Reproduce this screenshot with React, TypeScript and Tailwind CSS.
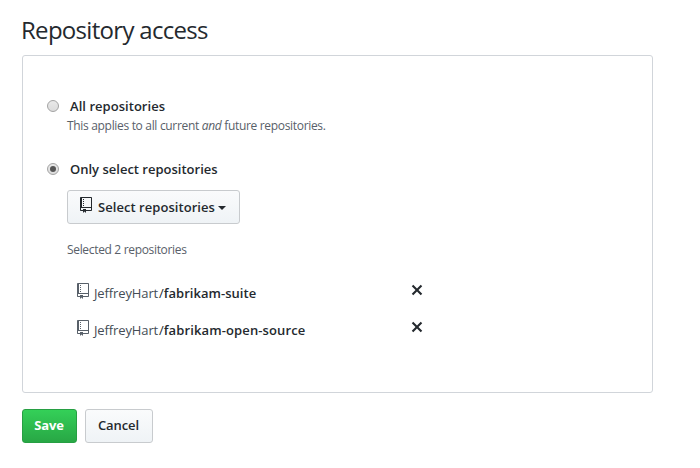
import React from "react";

function RepoIcon({ className = "" }: { className?: string }) {
  return (
    <svg className={`h-4 w-3 shrink-0 ${className}`} viewBox="0 0 12 16" fill="currentColor" aria-hidden="true">
      <path fillRule="evenodd" d="M4 9H3V8h1v1zm0-3H3v1h1V6zm0-2H3v1h1V4zm0-2H3v1h1V2zm8-1v12c0 .55-.45 1-1 1H6v2l-1.5-1.5L3 16v-2H1c-.55 0-1-.45-1-1V1c0-.55.45-1 1-1h10c.55 0 1 .45 1 1zm-1 10H1v2h2v-1h3v1h5v-2zm0-10H2v9h9V1z" />
    </svg>
  );
}

function RemoveIcon() {
  return (
    <svg className="h-4 w-3" viewBox="0 0 12 16" fill="currentColor" aria-hidden="true">
      <path fillRule="evenodd" d="M7.48 8l3.75 3.75-1.48 1.48L6 9.48l-3.75 3.75-1.48-1.48L4.52 8 .77 4.25l1.48-1.48L6 6.52l3.75-3.75 1.48 1.48L7.48 8z" />
    </svg>
  );
}

function Radio({ checked = false }: { checked?: boolean }) {
  return (
    <span role="radio" aria-checked={checked} className="flex size-3 shrink-0 items-center justify-center rounded-full border border-[#a3a3a3] bg-linear-to-b from-[#e9e9e9] to-[#dcdcdc]">
      {checked && <span className="size-1.5 rounded-full bg-[#555]" />}
    </span>
  );
}

function RepoRow({ name, tracking }: { name: string; tracking: string }) {
  return (
    <li className="flex h-[37px] w-[346px] items-start">
      <RepoIcon className="mt-px text-[#586069]" />
      <span className="ml-[5px] mt-px w-[65px] text-[13px] leading-5 tracking-[-0.12px] text-[#444d56]">JeffreyHart</span>
      <span className="mt-px text-[13px] leading-5">/</span>
      <span className={`mt-px flex-1 text-[13px] font-semibold leading-5 ${tracking}`}>{name}</span>
      <button aria-label={`Remove ${name}`}><RemoveIcon /></button>
    </li>
  );
}

export default function App() {
  return (
    <main className="h-[468px] w-[700px] overflow-hidden whitespace-nowrap bg-white pl-[22px] pt-3 font-['Open_Sans','Noto_Sans',sans-serif] text-[#24292e]">
      <h1 className="-ml-px h-[43px] text-2xl leading-9 tracking-[-0.7px]">Repository access</h1>
      <section className="h-[338px] w-[631px] rounded-[3px] border border-[#d1d5da] pl-6 pt-10">
        <div className="flex h-5 items-center">
          <Radio />
          <span className="ml-[11px] text-[13px] font-semibold leading-5 tracking-[0.04px]">All repositories</span>
        </div>
        <p className="ml-5 mt-px text-xs leading-[18px] tracking-[-0.32px] text-[#586069]">
          This applies to all current <em>and</em> future repositories.
        </p>
        <div className="mt-6 flex h-5 items-center">
          <Radio checked />
          <span className="ml-[11px] text-[13px] font-semibold leading-5">Only select repositories</span>
        </div>
        <button className="ml-5 mt-[11px] flex h-[34px] w-[173px] items-center rounded-[3px] border border-[#c8cbce] bg-linear-to-b from-[#fafbfc] to-[#eff3f6] pl-3">
          <RepoIcon className="-mt-1" />
          <span className="ml-1.5 mt-0.5 w-[120px] text-left text-[13px] font-semibold tracking-[0.05px]">Select repositories</span>
          <span className="mt-px border-x-4 border-t-4 border-x-transparent border-t-[#24292e]" />
        </button>
        <p className="ml-5 mt-4 text-xs leading-5 tracking-[-0.33px] text-[#586069]">Selected 2 repositories</p>
        <ul className="ml-[30px] mt-[22px]">
          <RepoRow name="fabrikam-suite" tracking="tracking-[0.03px]" />
          <RepoRow name="fabrikam-open-source" tracking="tracking-[0.12px]" />
        </ul>
      </section>
      <div className="mt-4 flex gap-2">
        <button className="h-[34px] w-[55px] rounded-[3px] border border-[#279f43] bg-linear-to-b from-[#34d058] to-[#28a745] pr-px text-[13px] font-bold tracking-[-0.2px] text-white">Save</button>
        <button className="h-[34px] w-[68px] rounded-[3px] border border-[#c8cbce] bg-linear-to-b from-[#fafbfc] to-[#eff3f6] pr-px text-[13px] font-semibold tracking-[-0.1px]">Cancel</button>
      </div>
    </main>
  );
}
